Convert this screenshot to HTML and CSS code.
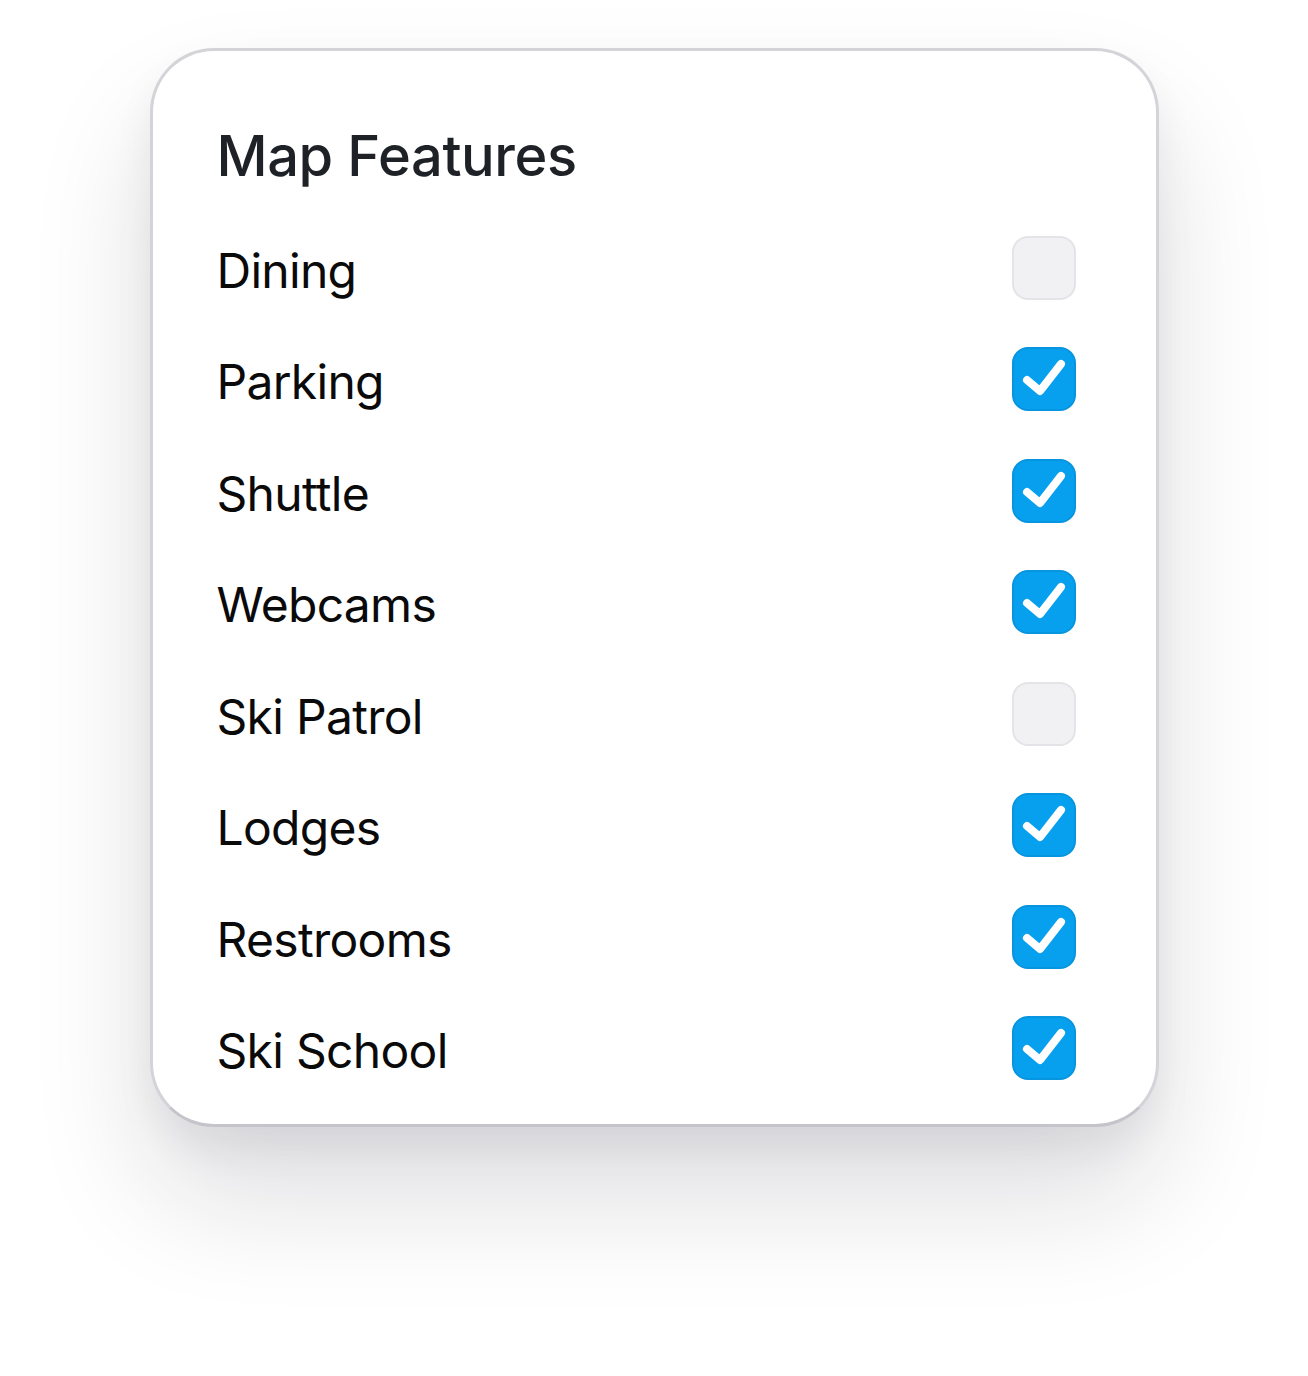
FILE: index.html
```html
<!DOCTYPE html>
<html>
<head>
<meta charset="utf-8">
<link rel="stylesheet" href="styles.css">
</head>
<body>
<div class="card">
  <h1 class="title">Map Features</h1>
  <ul class="list">
    <li class="row"><span class="label">Dining</span><span class="box"></span></li>
    <li class="row"><span class="label">Parking</span><span class="box on"><svg viewBox="0 0 64 64"><path d="M15 33 L28 44 L49 17"/></svg></span></li>
    <li class="row"><span class="label">Shuttle</span><span class="box on"><svg viewBox="0 0 64 64"><path d="M15 33 L28 44 L49 17"/></svg></span></li>
    <li class="row"><span class="label">Webcams</span><span class="box on"><svg viewBox="0 0 64 64"><path d="M15 33 L28 44 L49 17"/></svg></span></li>
    <li class="row"><span class="label">Ski Patrol</span><span class="box"></span></li>
    <li class="row"><span class="label">Lodges</span><span class="box on"><svg viewBox="0 0 64 64"><path d="M15 33 L28 44 L49 17"/></svg></span></li>
    <li class="row"><span class="label">Restrooms</span><span class="box on"><svg viewBox="0 0 64 64"><path d="M15 33 L28 44 L49 17"/></svg></span></li>
    <li class="row"><span class="label">Ski School</span><span class="box on"><svg viewBox="0 0 64 64"><path d="M15 33 L28 44 L49 17"/></svg></span></li>
  </ul>
</div>
</body>
</html>
```

FILE: styles.css
```css
html, body {
  margin: 0;
  padding: 0;
  background: #ffffff;
}
body {
  font-family: Inter, "Noto Sans", sans-serif;
  padding-top: 48px;
  min-height: 1376px;
  box-sizing: border-box;
}
.card {
  box-sizing: border-box;
  width: 1009px;
  height: 1079px;
  margin: 0 auto;
  background: #ffffff;
  border: 3px solid #d4d4d8;
  border-bottom-color: #c4c4ca;
  border-radius: 64px;
  padding: 73px 80px 44px 64px;
  box-shadow: 0 20px 40px rgba(24, 24, 40, 0.06), 0 70px 120px rgba(24, 24, 40, 0.14);
  display: flex;
  flex-direction: column;
  gap: 48px;
}
.title {
  margin: 0;
  font-size: 56px;
  line-height: 64px;
  font-weight: 500;
  color: #1e2126;
  letter-spacing: -0.4px;
}
.list {
  list-style: none;
  margin: 0;
  padding: 0;
  display: flex;
  flex-direction: column;
  gap: 47.43px;
}
.row {
  height: 64px;
  display: flex;
  align-items: center;
  justify-content: space-between;
}
.label {
  font-size: 48px;
  line-height: 64px;
  font-weight: 400;
  color: #0a0a0a;
  letter-spacing: -0.7px;
  padding-top: 6px;
}
.box {
  box-sizing: border-box;
  width: 64px;
  height: 64px;
  border-radius: 16px;
  background: #f1f1f4;
  border: 2px solid #e4e4e8;
  display: flex;
}
.box.on {
  background: #07a0ee;
  border-color: #0895df;
}
.box svg {
  width: 64px;
  height: 64px;
  margin: -2px;
}
.box svg path {
  fill: none;
  stroke: #ffffff;
  stroke-width: 8;
  stroke-linecap: round;
  stroke-linejoin: round;
}
```
